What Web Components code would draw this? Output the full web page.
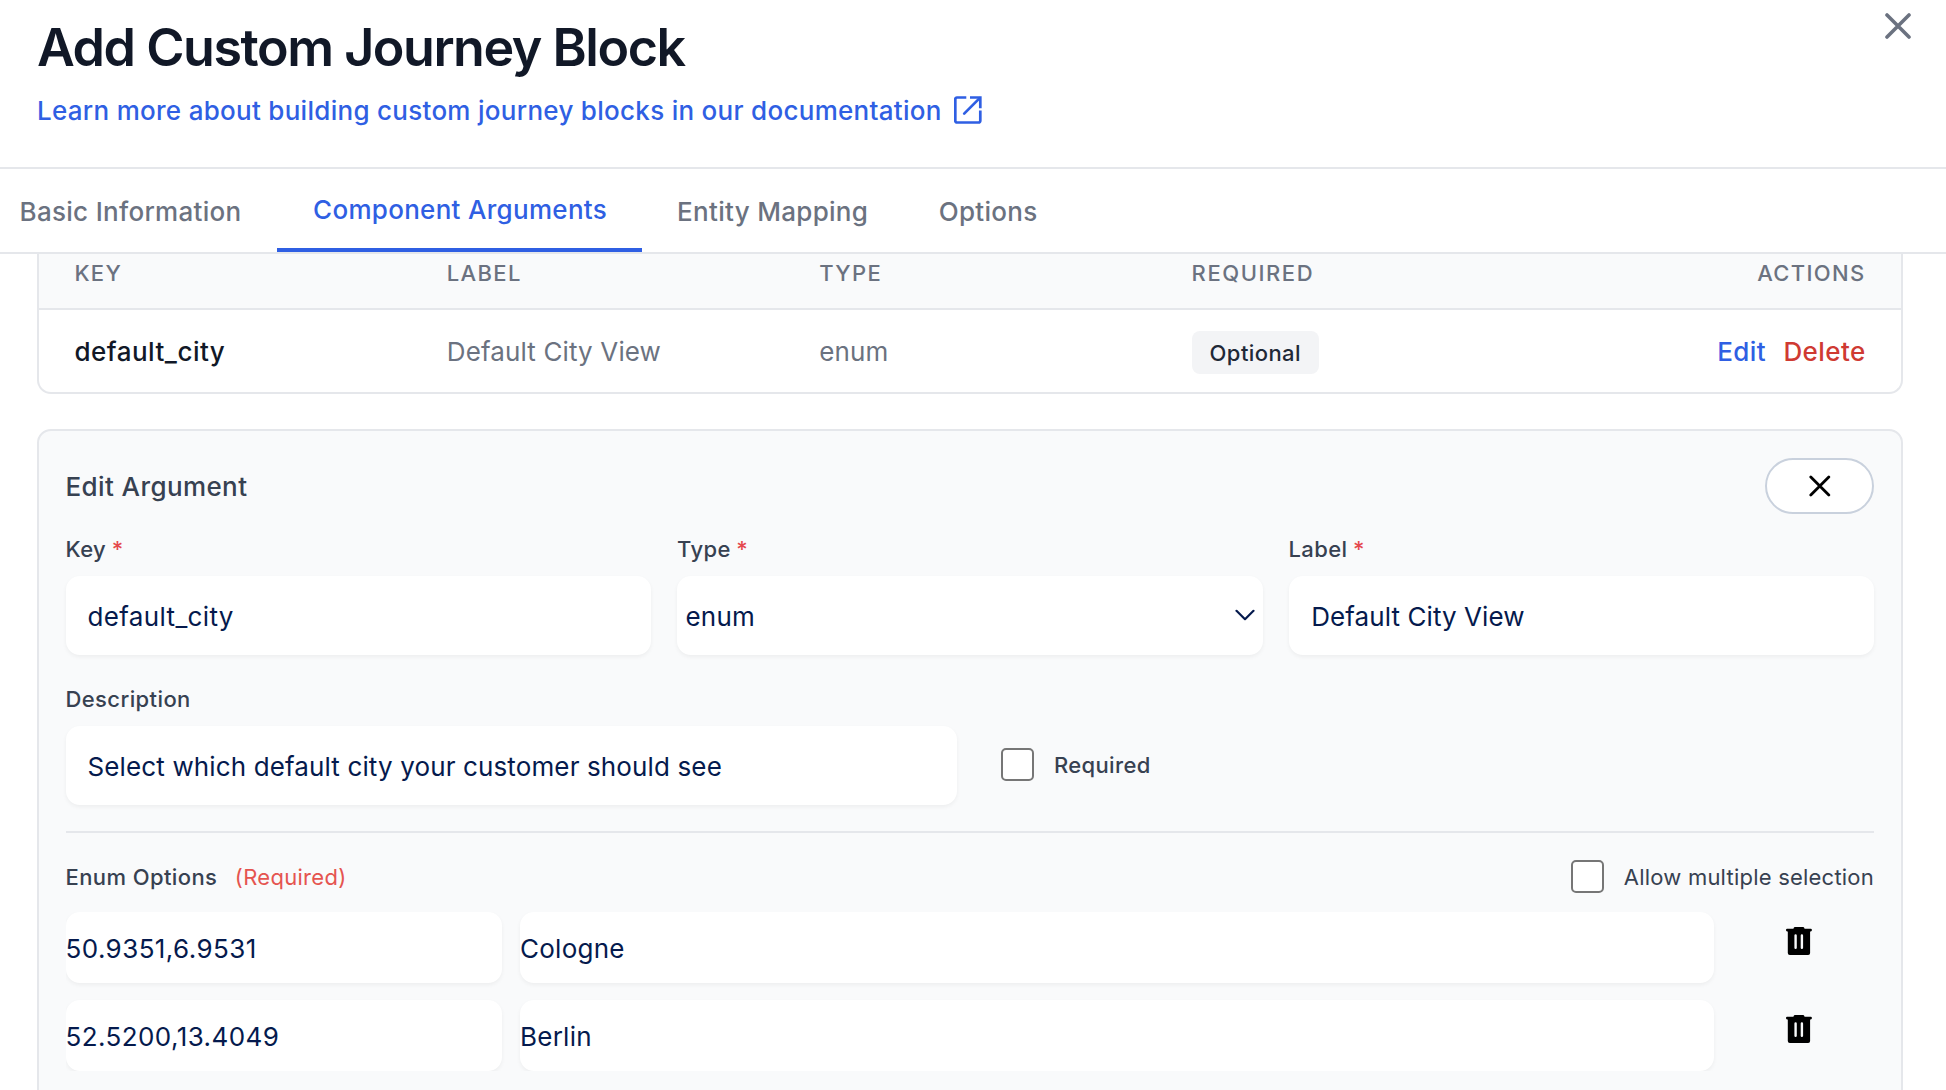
<!DOCTYPE html>
<html lang="en">
<head>
<meta charset="utf-8">
<title>Add Custom Journey Block</title>
<style>
html,body{margin:0;height:100%;overflow:hidden;background:#fff}
body{font-family:Inter,"Liberation Sans",sans-serif;font-size:26px;color:#111827}
</style>
</head>
<body>
<journey-dialog></journey-dialog>
<script>
const define = (name, html) => {
  const tpl = document.createElement('template');
  tpl.innerHTML = html;
  customElements.define(name, class extends HTMLElement {
    constructor() {
      super();
      this.attachShadow({ mode: 'open' }).append(tpl.content.cloneNode(true));
    }
  });
};

define('dialog-header', `
<style>
:host{display:flex;justify-content:space-between;box-sizing:border-box;height:169px;padding:17px 35px 0 37px;border-bottom:2px solid #e5e7eb;background:#fff}
h1{margin:0;font-size:52px;line-height:62px;font-weight:600;letter-spacing:-1.46px;color:#111827;white-space:nowrap}
.link{display:flex;align-items:center;gap:12px;margin-top:13px;line-height:38px;font-weight:500;letter-spacing:.285px;color:#2f5fe3;white-space:nowrap}
.link svg{display:block;margin-top:-3px}
.close{display:block;margin-top:-4px}
</style>
<div>
  <h1><slot name="title"></slot></h1>
  <div class="link"><slot name="link"></slot>
    <svg width="28" height="28" viewBox="0 0 28 28" fill="none" stroke="#2f5fe3" stroke-width="2.7" stroke-linejoin="round"><path d="M12.3 1.5H3a1.7 1.7 0 0 0-1.7 1.7v21.6a1.7 1.7 0 0 0 1.7 1.7h21.6a1.7 1.7 0 0 0 1.7-1.7v-10.3"/><path d="M16 1.5h10.3v10.7" stroke-linejoin="miter"/><path d="M25.7 2.1L10.2 17.6" stroke-linecap="round"/></svg>
  </div>
</div>
<svg class="close" width="26" height="26" viewBox="0 0 26 26" fill="none" stroke="#6b7280" stroke-width="3.6" stroke-linecap="round"><path d="M2 2L24 24M24 2L2 24"/></svg>
`);

define('tab-bar', `
<style>
:host{display:flex;box-sizing:border-box;height:85px;border-bottom:2px solid #e5e7eb;background:#fff}
</style>
<slot></slot>
`);

define('tab-item', `
<style>
:host{display:block;box-sizing:border-box;height:83px;padding:24px var(--pr,36px) 0 var(--pl,36px);line-height:38px;font-weight:500;letter-spacing:.3px;color:#6b7280;white-space:nowrap}
:host([active]){padding-top:22px;border-bottom:4px solid #2f5fe3;color:#2f5fe3}
</style>
<slot></slot>
`);

define('argument-table', `
<style>
:host{display:block;box-sizing:border-box;height:140px;margin:0 43px 0 37px;border:2px solid #e5e7eb;border-top:0;border-radius:0 0 14px 14px;overflow:hidden;background:#fff}
</style>
<slot></slot>
`);

define('table-head', `
<style>
:host{display:grid;grid-template-columns:repeat(5,1fr);box-sizing:border-box;height:56px;border-bottom:2px solid #e5e7eb;background:#f9fafb;font-size:22px;line-height:38px;font-weight:500;letter-spacing:1.35px;color:#6b7280}
::slotted(*){padding:0 35.4px}
::slotted(:last-child){text-align:right}
</style>
<slot></slot>
`);

define('table-row', `
<style>
:host{display:grid;grid-template-columns:repeat(5,1fr);align-items:center;height:82px;padding-top:1px;box-sizing:border-box;line-height:38px;letter-spacing:.13px;color:#6b7280;white-space:nowrap}
::slotted(*){padding:0 35.4px}
.actions{display:flex;justify-content:flex-end;gap:17.5px;padding-right:35.4px;font-weight:500;letter-spacing:.4px}
.edit{color:#2f5fe3}
.delete{color:#cf3a32}
</style>
<slot></slot><div class="actions"><span class="edit">Edit</span><span class="delete">Delete</span></div>
`);

define('status-badge', `
<style>
:host{display:flex;align-items:center;box-sizing:border-box;width:127px;height:43px;margin-top:2px;padding:0 0 0 18px;border-radius:8px;background:#f3f4f6;font-size:22px;font-weight:500;letter-spacing:.42px;color:#1f2937}
</style>
<slot></slot>
`);

define('edit-card', `
<style>
:host{display:block;box-sizing:border-box;height:760px;margin:35px 43px 0 37px;padding:27px 27px 0 26.5px;border:2px solid #e5e7eb;border-radius:14px;background:#f9fafb}
.top{display:flex;justify-content:space-between;align-items:center;height:56px}
.title{line-height:38px;margin-top:2px;font-weight:500;letter-spacing:.4px;color:#374151}
.button{display:flex;align-items:center;justify-content:center;box-sizing:border-box;width:109px;height:56px;border:2px solid #c9d1dd;border-radius:28px;background:#fff}
</style>
<div class="top"><div class="title"><slot name="title"></slot></div>
<div class="button"><svg width="22" height="22" viewBox="0 0 22 22" fill="none" stroke="#000" stroke-width="2.8" stroke-linecap="round"><path d="M1.8 2L19.8 20M19.8 2L1.8 20"/></svg></div></div>
<slot></slot>
`);

define('field-row', `
<style>
:host{display:flex;gap:26px}
</style>
<slot></slot>
`);

define('text-field', `
<style>
:host{display:block;flex:1 1 0;min-width:0;white-space:nowrap}
.label{font-size:22px;line-height:32px;font-weight:500;letter-spacing:.4px;color:#374151}
.star{color:#e5484d;margin-left:5.5px;display:none}
:host([required]) .star{display:inline}
.box{display:flex;align-items:center;justify-content:space-between;box-sizing:border-box;height:79px;margin-top:11px;padding:2px 7.5px 0 var(--pad,22px);border-radius:14px;background:#fff;box-shadow:0 2px 4px rgba(0,0,0,.05);letter-spacing:var(--ls,.2px);color:#051a4d}
svg{display:none;margin-top:-3px}
:host([select]) svg{display:block}
</style>
<div class="label"><slot name="label"></slot><span class="star">*</span></div>
<div class="box"><span><slot></slot></span><svg width="20" height="12" viewBox="0 0 20 12" fill="none" stroke="#051a4d" stroke-width="2.2" stroke-linecap="round" stroke-linejoin="round"><path d="M1.5 1.8L10 10.2L18.5 1.8"/></svg></div>
`);

define('check-box', `
<style>
:host{display:flex;align-items:center;gap:20px;height:33px;font-size:22px;line-height:33px;color:#374151;white-space:nowrap}
.box{box-sizing:border-box;width:33px;height:33px;border:2px solid #767676;border-radius:5px;background:#fff}
.text{padding-top:1px}
</style>
<span class="box"></span><span class="text"><slot></slot></span>
`);

define('option-list', `
<style>
:host{display:block;margin-top:26px;border-top:2px solid #e5e7eb}
.head{display:flex;justify-content:space-between;height:33px;margin-top:27px;font-size:22px;line-height:34px;color:#374151}
.name{font-weight:500;letter-spacing:.4px}
.req{margin-left:17.5px;color:#e5544f;letter-spacing:.3px}
.rows{display:flex;flex-direction:column;gap:17px;height:159px;margin-top:19px;overflow:hidden}
</style>
<div class="head"><div><span class="name">Enum Options</span><span class="req">(Required)</span></div><check-box style="letter-spacing:.22px">Allow multiple selection</check-box></div>
<div class="rows"><slot></slot></div>
`);

define('option-row', `
<style>
:host{display:flex;gap:18px;flex:none;height:71px}
.box{box-sizing:border-box;height:71px;padding-top:1px;line-height:71px;border-radius:14px;background:#fff;box-shadow:0 2px 4px rgba(0,0,0,.05);color:#051a4d;white-space:nowrap}
.value{width:436px;letter-spacing:.42px}
.name{width:1194px;padding-left:.5px;letter-spacing:.25px}
svg{display:block;margin:14px 0 0 53px}
</style>
<div class="box value"><slot name="value"></slot></div>
<div class="box name"><slot></slot></div>
<svg width="28" height="30" viewBox="0 0 28 30"><path fill="#000" fill-rule="evenodd" d="M9.8 1h8.4q1 0 1.4 1.7h6.2q1.1 0 1.1 1.3t-1.1 1.4h-.7v21.6q0 2-2 2H4.8q-2 0-2-2V5.4h-.7Q1 5.3 1 4t1.1-1.3h6.3Q8.8 1 9.8 1zM10.6 8.2q-1.2 0-1.2 1.2v12.4q0 1.2 1.2 1.2t1.2-1.2v-12.4q0-1.2-1.2-1.2zM16.9 8.2q-1.2 0-1.2 1.2v12.4q0 1.2 1.2 1.2t1.2-1.2v-12.4q0-1.2-1.2-1.2z"/></svg>
`);

define('journey-dialog', `
<style>
:host{display:block;height:1090px;overflow:hidden;background:#fff}
.key{color:#111827;font-weight:500;letter-spacing:.5px}
.description{display:flex;gap:44px;margin-top:28px}
.description text-field{flex:none;width:891.5px}
.description check-box{margin-top:65px;font-weight:500;letter-spacing:.35px}
</style>
<dialog-header><span slot="title">Add Custom Journey Block</span><span slot="link">Learn more about building custom journey blocks in our documentation</span></dialog-header>
<tab-bar>
  <tab-item style="--pl:19.5px;--pr:35.5px">Basic Information</tab-item>
  <tab-item active style="--pl:36px;--pr:35px">Component Arguments</tab-item>
  <tab-item style="--pl:35px">Entity Mapping</tab-item>
  <tab-item style="--pl:34.5px">Options</tab-item>
</tab-bar>
<argument-table>
  <table-head><span>KEY</span><span>LABEL</span><span>TYPE</span><span style="letter-spacing:1.55px">REQUIRED</span><span>ACTIONS</span></table-head>
  <table-row><span class="key">default_city</span><span>Default City View</span><span>enum</span><span><status-badge>Optional</status-badge></span></table-row>
</argument-table>
<edit-card>
  <span slot="title">Edit Argument</span>
  <field-row style="margin-top:19px">
    <text-field required style="--ls:.35px"><span slot="label">Key</span>default_city</text-field>
    <text-field required select style="--pad:8.5px"><span slot="label">Type</span>enum</text-field>
    <text-field required style="--pad:22.7px;--ls:.08px"><span slot="label">Label</span>Default City View</text-field>
  </field-row>
  <div class="description">
    <text-field style="--ls:.13px"><span slot="label">Description</span>Select which default city your customer should see</text-field>
    <check-box>Required</check-box>
  </div>
  <option-list>
    <option-row><span slot="value">50.9351,6.9531</span>Cologne</option-row>
    <option-row><span slot="value">52.5200,13.4049</span>Berlin</option-row>
  </option-list>
</edit-card>
`);
</script>
</body>
</html>
